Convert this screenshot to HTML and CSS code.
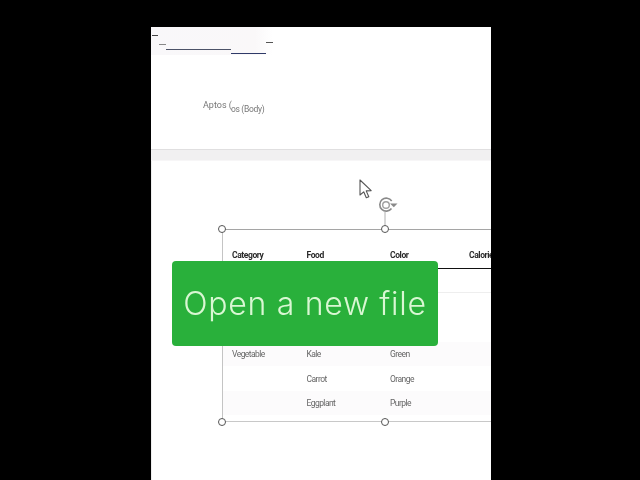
FILE: index.html
```html
<!DOCTYPE html>
<html lang="en">
<head>
<meta charset="utf-8">
<title>Open a new file</title>
<link rel="stylesheet" href="styles.css">
</head>
<body>
<main class="page">
  <header class="ribbon">
    <svg class="ribbon-marks" width="122" height="28" viewBox="0 0 122 28" aria-hidden="true">
      <defs>
        <linearGradient id="tint" x1="0" x2="1" y1="0" y2="0">
          <stop offset="0" stop-color="#f9f8fa"/>
          <stop offset="0.85" stop-color="#faf8f9"/>
          <stop offset="1" stop-color="#ffffff"/>
        </linearGradient>
      </defs>
      <rect width="122" height="28" fill="url(#tint)"/>
      <path d="M1 8.500h6" stroke="#444" stroke-width="1"/>
      <path d="M8 17.500h7" stroke="#888" stroke-width="1"/>
      <path d="M15 22.500h65" stroke="#4c5368" stroke-width="1"/>
      <path d="M80 26.500h35" stroke="#2f3a68" stroke-width="1"/>
      <path d="M115 15.500h7" stroke="#555" stroke-width="1"/>
    </svg>
    <div class="font-name"><span>Aptos (</span><span class="font-name-low">os (Body)</span></div>
  </header>
  <div class="band"></div>
  <section class="doc">
    <svg class="cursor" width="14" height="20" viewBox="0 0 14 20" aria-hidden="true">
      <path d="M1 1v15l3.700-3.200 2.600 6 2.500-1.100-2.600-5.800 5-.3z" fill="#fff" stroke="#555" stroke-width="1.100" stroke-linejoin="round"/>
    </svg>
    <div class="frame">
      <svg class="rotate" width="22" height="36" viewBox="0 0 22 36" aria-hidden="true">
        <path d="M15.500 14.500a6.500 6.500 0 1 1 .2-7.500" fill="none" stroke="#8a8a8a" stroke-width="1.600"/>
        <circle cx="10" cy="11" r="3.300" fill="none" stroke="#a0a0a0" stroke-width="1.400"/>
        <path d="M14 9.500h7.500l-3.700 3.800z" fill="#8a8a8a"/>
        <path d="M9 18v18" stroke="#b0b0b0" stroke-width="1"/>
      </svg>
      <span class="handle handle-tl"></span>
      <span class="handle handle-tm"></span>
      <span class="handle handle-bl"></span>
      <span class="handle handle-bm"></span>
      <table class="food">
        <thead>
          <tr><th>Category</th><th>Food</th><th>Color</th><th>Calories</th></tr>
        </thead>
        <tbody>
          <tr><td></td><td></td><td></td><td></td></tr>
          <tr><td></td><td></td><td></td><td></td></tr>
          <tr><td></td><td></td><td></td><td></td></tr>
          <tr class="tint"><td>Vegetable</td><td>Kale</td><td>Green</td><td></td></tr>
          <tr><td></td><td>Carrot</td><td>Orange</td><td></td></tr>
          <tr class="tint"><td></td><td>Eggplant</td><td>Purple</td><td></td></tr>
        </tbody>
      </table>
    </div>
    <div class="banner">Open a new file</div>
  </section>
</main>
</body>
</html>
```
FILE: styles.css
```css
* { box-sizing: border-box; }
html, body { height: 100%; }
body {
  margin: 0;
  background: #000;
  overflow: hidden;
  font-family: "Roboto", "Liberation Sans", sans-serif;
}
.page {
  width: 340px;
  height: 453px;
  margin: 27px 0 0 151px;
  display: flex;
  flex-direction: column;
  overflow: hidden;
  background: #fff;
  filter: blur(0.35px);
}
.ribbon {
  height: 122px;
  flex: none;
  display: flex;
  flex-direction: column;
  align-items: flex-start;
  background: #fff;
}
.ribbon-marks { display: block; }
.font-name {
  margin: 45px 0 0 52px;
  display: flex;
  font-size: 9px;
  line-height: 11px;
  color: #777;
}
.font-name-low {
  margin: 4px 0 0 -1px;
  font-size: 8.500px;
  letter-spacing: -0.3px;
}
.band {
  height: 12px;
  flex: none;
  background: #f1f0f1;
  border-top: 1px solid #e0dfe0;
  border-bottom: 1px solid #f7f6f7;
}
.doc {
  flex: 1;
  position: relative;
  padding: 68px 0 0 70px;
  background: #fff;
  border-left: 1px solid #eee;
}
.frame {
  position: relative;
  width: 330px;
  height: 193px;
  border-top: 1px solid #a5a5a5;
  border-bottom: 1px solid #c8c8c8;
  border-left: 1px solid #c4c4c4;
}
.food {
  table-layout: fixed;
  border-collapse: collapse;
  width: 330px;
  font-size: 8.500px;
  letter-spacing: -0.4px;
  color: #666;
}
.food th, .food td {
  padding: 0 0 0 9px;
  text-align: left;
  font-weight: 400;
  overflow: hidden;
  white-space: nowrap;
}
.food th:nth-child(1) { width: 74.500px; }
.food th:nth-child(2) { width: 83.500px; }
.food th:nth-child(3) { width: 79px; }
.food th {
  height: 38px;
  padding-top: 12px;
  font-weight: 700;
  color: #2a2a2a;
  border-bottom: 1px solid #111;
}
.food td {
  height: 24.500px;
  padding-top: 1px;
  letter-spacing: -0.55px;
}
.food tbody tr:first-child td { border-bottom: 1px solid #eee; }
.tint { background: #fcfbfc; }
.handle {
  position: absolute;
  width: 8px;
  height: 8px;
  border: 1.500px solid #555;
  border-radius: 50%;
  background: #fff;
  z-index: 1;
}
.handle-tl { left: -5px; top: -5px; }
.handle-tm { left: 158px; top: -5px; }
.handle-bl { left: -5px; bottom: -5px; }
.handle-bm { left: 158px; bottom: -5px; }
.rotate {
  position: absolute;
  left: 153px;
  top: -36px;
}
.cursor {
  position: absolute;
  left: 207px;
  top: 18px;
}
.banner {
  position: absolute;
  left: 20px;
  top: 100px;
  width: 266px;
  height: 85px;
  display: flex;
  align-items: center;
  justify-content: center;
  border-radius: 4px;
  background: #29b03b;
  color: #d9f7d3;
  font-family: "Inter", "Open Sans", sans-serif;
  font-size: 32px;
  font-weight: 300;
  letter-spacing: 0.7px;
}
```
